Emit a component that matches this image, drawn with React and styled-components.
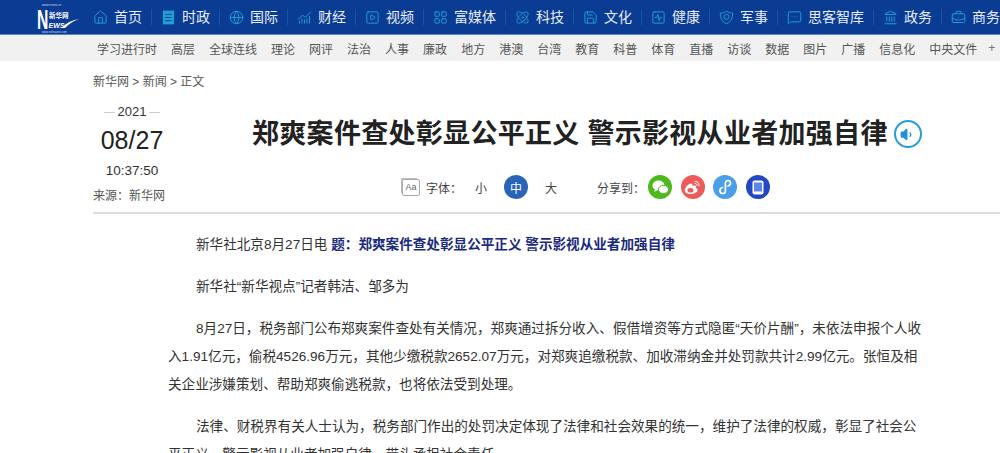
import React from 'react'
import styled, { createGlobalStyle } from 'styled-components'
import {
  Home, Globe, ChartNoAxesCombined, SquarePlay, LayoutGrid, Atom,
  Save, SquareActivity, MessageSquareMore, Landmark, BriefcaseBusiness, Volume1,
} from 'lucide-react'

const navs = [
  { label: '首页', Icon: Home },
  { label: '时政', Icon: NewsIcon },
  { label: '国际', Icon: Globe },
  { label: '财经', Icon: ChartNoAxesCombined },
  { label: '视频', Icon: SquarePlay },
  { label: '富媒体', Icon: LayoutGrid },
  { label: '科技', Icon: Atom },
  { label: '文化', Icon: Save },
  { label: '健康', Icon: SquareActivity },
  { label: '军事', Icon: ArmyIcon },
  { label: '思客智库', Icon: MessageSquareMore },
  { label: '政务', Icon: Landmark },
  { label: '商务', Icon: BriefcaseBusiness },
]

const subNavs = ['学习进行时', '高层', '全球连线', '理论', '网评', '法治', '人事', '廉政', '地方', '港澳', '台湾', '教育', '科普', '体育', '直播', '访谈', '数据', '图片', '广播', '信息化', '中央文件']

function ArmyIcon(props) {
  return (
    <svg width={props.size} height={props.size} viewBox="0 0 24 24" fill="none" stroke="currentColor" strokeWidth={props.strokeWidth}>
      <path d="M2 5c4 0 7-1 10-3 3 2 6 3 10 3 0 8-3 14-10 17C5 19 2 13 2 5z" />
      <circle cx="12" cy="11" r="4" />
    </svg>
  )
}

function NewsIcon(props) {
  return (
    <svg width={props.size} height={props.size} viewBox="0 0 24 24">
      <rect x="3" y="1" width="18" height="22" fill="currentColor" />
      <path d="M7 7h10M7 12h10M7 17h10" stroke="#0a3c94" strokeWidth="1.5" />
    </svg>
  )
}

function Logo() {
  return (
    <LogoSvg viewBox="0 0 44 31">
      <text x="6" y="3.600" fontSize="3.2" fill="#cfd8ea" fontFamily="Liberation Sans">www.news.cn</text>
      <text transform="translate(1 27) scale(0.58 1)" fontSize="27" fontWeight="700" fill="#fff" fontFamily="Liberation Sans">N</text>
      <text x="13" y="15.500" fontSize="6.500" fontWeight="700" fill="#fff" fontFamily="Noto Sans CJK SC">新华网</text>
      <text x="12.500" y="26" fontSize="7" fontWeight="700" fill="#fff" fontFamily="Liberation Sans" fontStyle="italic">EWS</text>
      <path d="M25 26c5-5 11-8 18-9-6 2-10 5-14 9z" fill="#fff" />
      <text x="6" y="30.600" fontSize="2.800" fill="#cfd8ea" fontFamily="Liberation Sans">www.xinhuanet.com</text>
    </LogoSvg>
  )
}

function App() {
  return (
    <Page>
      <GlobalStyle />
      <MainNav>
        <Logo />
        <NavList>
          {navs.map(({ label, Icon }) => (
            <NavItem key={label}>
              <IconBox><Icon size={15} strokeWidth={1.6} /></IconBox>
              {label}
            </NavItem>
          ))}
        </NavList>
      </MainNav>
      <SubNav>
        {subNavs.map(s => <span key={s}>{s}</span>)}
        <More>+</More>
      </SubNav>
      <Content>
        <Crumbs>新华网 &gt; 新闻 &gt; 正文</Crumbs>
        <Head>
          <DateCol>
            <Year>2021</Year>
            <Day>08/27</Day>
            <Clock>10:37:50</Clock>
            <Source>来源：新华网</Source>
          </DateCol>
          <TitleCol>
            <TitleRow>
              <Title>郑爽案件查处彰显公平正义 警示影视从业者加强自律</Title>
              <Speaker><Volume1 size={15} fill="#1f8fdc" strokeWidth={2} /></Speaker>
            </TitleRow>
            <Tools>
              <FontIcon>Aa</FontIcon>
              <ToolLabel>字体：</ToolLabel>
              <SizeBtn>小</SizeBtn>
              <SizeBtn active>中</SizeBtn>
              <SizeBtn>大</SizeBtn>
              <ShareLabel>分享到：</ShareLabel>
              <ShareBtn color="#4fb81c">
                <svg width="17" height="15" viewBox="0 0 17 15" fill="#fff">
                  <ellipse cx="6.5" cy="5.5" rx="6" ry="5" />
                  <path d="M3 9l-.8 3 3.2-2z" />
                  <ellipse cx="11.5" cy="9.5" rx="5" ry="4.2" stroke="#4fb81c" />
                </svg>
              </ShareBtn>
              <ShareBtn color="#ee5a5a">
                <svg width="17" height="15" viewBox="0 0 17 15" fill="none">
                  <path d="M6.5 14C3 14 .8 12.400.8 10.200.8 7.500 4.500 3.500 7 3.500c1.500 0 1.700 1.300 1.300 2.500 2-.8 3.800-.4 3.800 1 0 .6-.2 1-.2 1 1 .3 1.700 1 1.700 2C13.600 12.300 10.500 14 6.500 14z" fill="#fff" />
                  <ellipse cx="6.500" cy="10.300" rx="3" ry="2.300" fill="#ee5a5a" />
                  <path d="M11 1.500c2.500-.3 4.500 1.500 4 4.500M11 3.500c1.300-.2 2.200.7 2 2" stroke="#fff" strokeLinecap="round" />
                </svg>
              </ShareBtn>
              <ShareBtn color="#4a9fe8">
                <svg width="14" height="16" viewBox="0 0 14 16" fill="none" stroke="#fff" strokeWidth="1.700" strokeLinecap="round">
                  <path d="M2 11.500c0 1.800 1.200 3 2.800 3s2.600-1.300 2.600-2.800V4.300C7.400 2.700 8.500 1.500 10 1.500s2.500 1.200 2.500 2.600-1 2.600-2.500 2.900" />
                  <path d="M4.500 8.500C3 8.800 2 10 2 11.500" />
                </svg>
              </ShareBtn>
              <ShareBtn color="#2347c5">
                <svg width="12" height="15" viewBox="0 0 12 15">
                  <rect x=".5" y=".5" width="11" height="14" rx="2" fill="#fff" />
                  <rect x="2" y="2.500" width="8" height="9" fill="#5f86e6" />
                </svg>
              </ShareBtn>
            </Tools>
          </TitleCol>
        </Head>
        <Article>
          <Para>新华社北京8月27日电 <Lead>题：郑爽案件查处彰显公平正义 警示影视从业者加强自律</Lead></Para>
          <Para>新华社“新华视点”记者韩洁、邹多为</Para>
          <Para>8月27日，税务部门公布郑爽案件查处有关情况，郑爽通过拆分收入、假借增资等方式隐匿“天价片酬”，未依法申报个人收入1.91亿元，偷税4526.96万元，其他少缴税款2652.07万元，对郑爽追缴税款、加收滞纳金并处罚款共计2.99亿元。张恒及相关企业涉嫌策划、帮助郑爽偷逃税款，也将依法受到处理。</Para>
          <Para>法律、财税界有关人士认为，税务部门作出的处罚决定体现了法律和社会效果的统一，维护了法律的权威，彰显了社会公平正义，警示影视从业者加强自律，带头承担社会责任。</Para>
        </Article>
      </Content>
    </Page>
  )
}

export default App

const GlobalStyle = createGlobalStyle`
  html, body {
    margin: 0;
    padding: 0;
    background: #fff;
    overflow: hidden;
  }
  body {
    font-family: "Liberation Sans", "Noto Sans CJK SC", sans-serif;
  }
`

const Page = styled.div`
  width: 1000px;
  height: 453px;
  overflow: hidden;
`

const MainNav = styled.div`
  height: 34px;
  display: flex;
  align-items: center;
  padding-left: 36px;
  background: #0a3c94;
  border-bottom: 1px solid #5b86c9;
  white-space: nowrap;
  overflow: hidden;
`

const LogoSvg = styled.svg`
  width: 44px;
  height: 31px;
  flex: none;
  margin-right: 13px;
`

const NavList = styled.div`
  display: flex;
  align-items: center;
`

const NavItem = styled.div`
  display: flex;
  align-items: center;
  font-size: 14px;
  line-height: 16px;
  color: #e8edf6;
  padding-right: 9px;
  margin-right: 9px;
  border-right: 1px solid #1f4f9f;
`

const IconBox = styled.span`
  display: flex;
  width: 16px;
  margin-right: 5px;
  color: #1e9ed3;
`

const SubNav = styled.div`
  height: 26px;
  display: flex;
  align-items: center;
  gap: 14px;
  padding-left: 97px;
  background: #f1f1f1;
  font-size: 12px;
  color: #555;
  white-space: nowrap;
`

const More = styled.span`
  margin-left: -3px;
  color: #777;
`

const Content = styled.div`
  padding-left: 93px;
`

const Crumbs = styled.div`
  padding-top: 13px;
  font-size: 12px;
  line-height: 16px;
  color: #555;
`

const Head = styled.div`
  display: flex;
  border-bottom: 2px solid #ddd;
  padding-bottom: 8px;
`

const DateCol = styled.div`
  width: 78px;
  flex: none;
  text-align: center;
  color: #333;
`

const Year = styled.div`
  margin-top: 14px;
  font-size: 13px;
  line-height: 16px;
  display: flex;
  align-items: center;
  justify-content: center;
  gap: 3px;

  &::before, &::after {
    content: '';
    width: 11px;
    height: 1px;
    background: #ccc;
  }
`

const Day = styled.div`
  margin-top: 5px;
  font-size: 25px;
  line-height: 30px;
  color: #222;
`

const Clock = styled.div`
  margin-top: 8px;
  font-size: 13.5px;
  line-height: 16px;
`

const Source = styled.div`
  margin-top: 9px;
  font-size: 12px;
  line-height: 16px;
  color: #555;
  white-space: nowrap;
  text-align: left;
`

const TitleCol = styled.div`
  padding-left: 81px;
`

const TitleRow = styled.div`
  margin-top: 24px;
  display: flex;
  align-items: center;
  gap: 6px;
`

const Title = styled.h1`
  margin: 0;
  font-size: 27px;
  letter-spacing: 0.3px;
  line-height: 40px;
  font-weight: 700;
  color: #222;
  white-space: nowrap;
`

const Speaker = styled.span`
  width: 24px;
  height: 24px;
  border: 2px solid #2b9bdc;
  border-radius: 50%;
  display: flex;
  align-items: center;
  justify-content: center;
  color: #1f8fdc;
`

const Tools = styled.div`
  margin-top: 21px;
  height: 24px;
  padding-left: 149px;
  display: flex;
  align-items: center;
  font-size: 12px;
  color: #444;
`

const FontIcon = styled.span`
  width: 16px;
  height: 15px;
  border: 1px solid #aaa;
  border-radius: 2px;
  box-shadow: -2px -2px 0 -1px #bbb;
  font-size: 9px;
  line-height: 15px;
  text-align: center;
  color: #666;
  margin-left: 1px;
`

const ToolLabel = styled.span`
  margin-left: 6px;
  width: 43px;
`

const SizeBtn = styled.span`
  width: 24px;
  height: 24px;
  border-radius: 50%;
  margin-right: 11px;
  display: flex;
  align-items: center;
  justify-content: center;
  background: ${p => (p.active ? '#2a64b8' : 'transparent')};
  color: ${p => (p.active ? '#fff' : '#444')};
`

const ShareLabel = styled.span`
  margin-left: 23px;
  width: 51px;
`

const ShareBtn = styled.span`
  width: 24px;
  height: 24px;
  border-radius: 50%;
  margin-right: 8.5px;
  display: flex;
  align-items: center;
  justify-content: center;
  background: ${p => p.color};
`

const Article = styled.div`
  padding: 17px 75px 0;
`

const Para = styled.p`
  margin: 0 0 14px;
  font-size: 13.6px;
  line-height: 28px;
  text-indent: 28px;
  color: #333;
`

const Lead = styled.strong`
  color: #1a2a7c;
  font-weight: 700;
`
